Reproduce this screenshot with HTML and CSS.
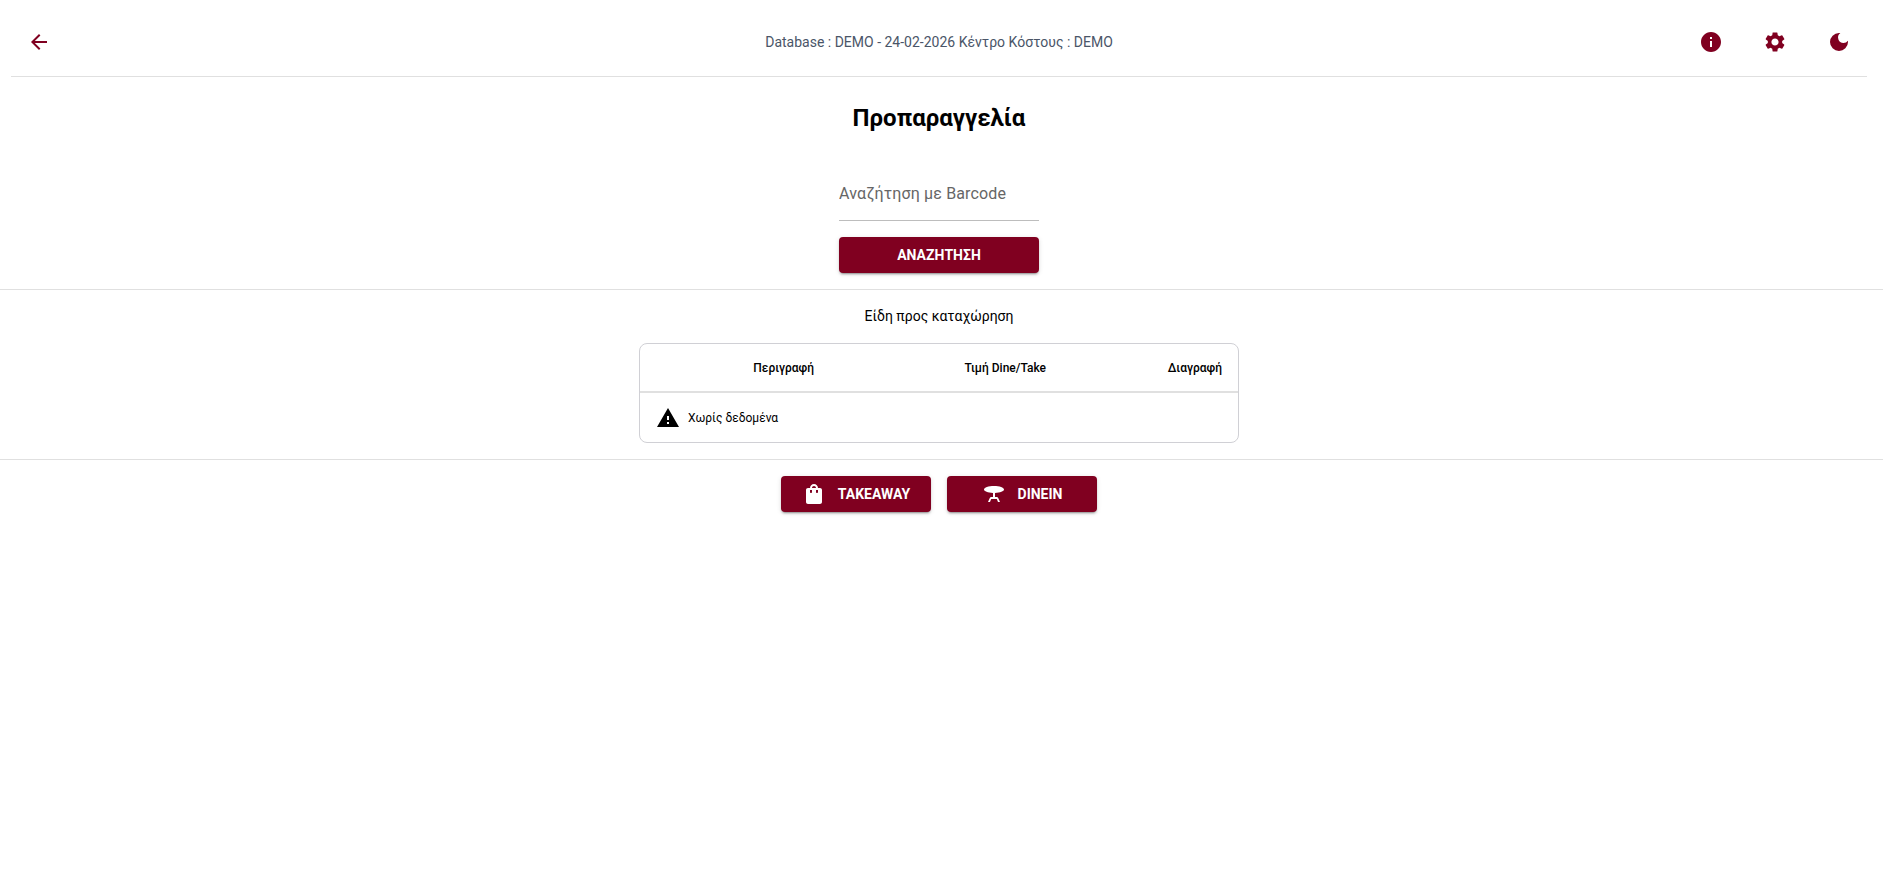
FILE: index.html
```html
<!DOCTYPE html>
<html lang="el">
  <head>
    <meta charset="UTF-8" />
    <meta name="viewport" content="width=device-width, initial-scale=1.0" />
    <title>Προπαραγγελία</title>
    <link rel="stylesheet" href="styles.css">
  </head>
  <body>
    <div class="page">
      <header class="topbar">
        <button class="icon-btn">
          <svg viewBox="0 0 24 24"><path d="M20 11H7.83l5.59-5.59L12 4l-8 8 8 8 1.41-1.41L7.83 13H20v-2z"/></svg>
        </button>
        <div class="db-info">Database : DEMO - 24-02-2026 Κέντρο Κόστους : DEMO</div>
        <div class="topbar-actions">
          <button class="icon-btn">
            <svg viewBox="0 0 24 24"><path d="M12 2C6.48 2 2 6.48 2 12s4.48 10 10 10 10-4.48 10-10S17.52 2 12 2zm1 15h-2v-6h2v6zm0-8h-2V7h2v2z"/></svg>
          </button>
          <button class="icon-btn">
            <svg viewBox="0 0 24 24"><path d="M19.14 12.94c.04-.3.06-.61.06-.94 0-.32-.02-.64-.07-.94l2.03-1.58a.49.49 0 0 0 .12-.61l-1.92-3.32a.488.488 0 0 0-.59-.22l-2.39.96c-.5-.38-1.03-.7-1.62-.94l-.36-2.54a.484.484 0 0 0-.48-.41h-3.84c-.24 0-.43.17-.47.41l-.36 2.54c-.59.24-1.13.57-1.62.94l-2.39-.96c-.22-.08-.47 0-.59.22L2.74 8.87c-.12.21-.08.47.12.61l2.03 1.58c-.05.3-.09.63-.09.94s.02.64.07.94l-2.03 1.58a.49.49 0 0 0-.12.61l1.92 3.32c.12.22.37.29.59.22l2.39-.96c.5.38 1.03.7 1.62.94l.36 2.54c.05.24.24.41.48.41h3.84c.24 0 .44-.17.47-.41l.36-2.54c.59-.24 1.13-.56 1.62-.94l2.39.96c.22.08.47 0 .59-.22l1.92-3.32c.12-.22.07-.47-.12-.61l-2.01-1.58zM12 15.6c-1.98 0-3.6-1.62-3.6-3.6s1.62-3.6 3.6-3.6 3.6 1.62 3.6 3.6-1.62 3.6-3.6 3.6z"/></svg>
          </button>
          <button class="icon-btn">
            <svg viewBox="0 0 24 24"><path d="M12 3a9 9 0 1 0 9 9c0-.46-.04-.92-.1-1.36a5.39 5.39 0 0 1-4.4 2.26 5.4 5.4 0 0 1-3.14-9.8c-.44-.06-.9-.1-1.36-.1z"/></svg>
          </button>
        </div>
      </header>

      <main class="main">
        <h1 class="title">Προπαραγγελία</h1>

        <section class="search">
          <input class="search-input" type="text" placeholder="Αναζήτηση με Barcode" />
          <button class="btn btn-block">ΑΝΑΖΗΤΗΣΗ</button>
        </section>

        <hr class="divider" />

        <p class="list-title">Είδη προς καταχώρηση</p>

        <div class="grid">
          <div class="grid-head">
            <span class="col">Περιγραφή</span>
            <span class="col">Τιμή Dine/Take</span>
            <span class="col">Διαγραφή</span>
          </div>
          <div class="grid-empty">
            <svg class="warn" viewBox="0 0 24 24"><path d="M1 21h22L12 2 1 21zm12-3h-2v-2h2v2zm0-4h-2v-4h2v4z"/></svg>
            <span>Χωρίς δεδομένα</span>
          </div>
        </div>

        <hr class="divider" />

        <div class="actions">
          <button class="btn btn-icon">
            <svg viewBox="0 0 24 24"><path d="M18 6h-2c0-2.21-1.79-4-4-4S8 3.79 8 6H6c-1.1 0-2 .9-2 2v12c0 1.1.9 2 2 2h12c1.1 0 2-.9 2-2V8c0-1.1-.9-2-2-2zm-8 4c0 .55-.45 1-1 1s-1-.45-1-1V8h2v2zm2-6c1.1 0 2 .9 2 2h-4c0-1.1.9-2 2-2zm4 6c0 .55-.45 1-1 1s-1-.45-1-1V8h2v2z"/></svg>
            <span>TAKEAWAY</span>
          </button>
          <button class="btn btn-icon">
            <svg viewBox="0 0 24 24"><path d="M22 7.5C22 5.57 17.52 4 12 4S2 5.57 2 7.5c0 1.81 3.95 3.3 9 3.48V15H9.24c-.65 0-1.24.41-1.45 1.03L6 20h2l1.2-3h5.6l1.2 3h2l-1.79-3.97A1.55 1.55 0 0 0 14.76 15H13v-4.02c5.05-.18 9-1.67 9-3.48z"/></svg>
            <span>DINEIN</span>
          </button>
        </div>
      </main>
    </div>
  </body>
</html>
```

FILE: styles.css
```css
* {
  box-sizing: border-box;
}

html,
body {
  margin: 0;
  height: 100%;
  background-color: #fff;
  overflow: hidden;
}

body {
  font-family: Roboto, "Liberation Sans", sans-serif;
  color: #000;
}

.page {
  width: 1878px;
}

.topbar {
  display: grid;
  grid-template-columns: 1fr auto 1fr;
  align-items: center;
  height: 77px;
  margin: 0 11px;
  border-bottom: 1px solid #e0e0e0;
  padding: 8px 4px 0;
}

.icon-btn {
  display: flex;
  align-items: center;
  justify-content: center;
  width: 48px;
  height: 48px;
  padding: 0;
  border: 0;
  background: none;
  color: #800020;
}

.icon-btn svg {
  width: 24px;
  height: 24px;
  fill: currentColor;
}

.db-info {
  font-size: 14px;
  color: #4a5568;
}

.topbar-actions {
  display: flex;
  justify-content: flex-end;
  gap: 16px;
}

.main {
  display: flex;
  flex-direction: column;
  align-items: center;
}

.title {
  margin: 25px 0 0;
  font-size: 24px;
  line-height: 32px;
  font-weight: 700;
}

.search {
  display: flex;
  flex-direction: column;
  width: 200px;
  margin-top: 31px;
}

.search-input {
  height: 56px;
  border: 0;
  border-bottom: 1px solid #bdbdbd;
  padding: 2px 0 0;
  font-family: inherit;
  font-size: 16px;
  letter-spacing: 0.15px;
  outline: none;
  background: none;
}

.search-input::placeholder {
  color: #666;
  opacity: 1;
}

.btn {
  display: flex;
  align-items: center;
  justify-content: center;
  height: 36px;
  border: 0;
  border-radius: 4px;
  background-color: #800020;
  color: #fff;
  font-family: inherit;
  font-size: 14px;
  font-weight: 700;
  box-shadow: 0 3px 1px -2px rgba(0, 0, 0, 0.2), 0 2px 2px 0 rgba(0, 0, 0, 0.14), 0 1px 5px 0 rgba(0, 0, 0, 0.12);
}

.btn-block {
  margin-top: 16px;
  width: 100%;
}

.divider {
  width: 1883px;
  align-self: flex-start;
  margin: 0;
  border: 0;
  border-top: 1px solid #e0e0e0;
}

.search + .divider {
  margin-top: 16px;
}

.list-title {
  margin: 16px 0 0;
  font-size: 14px;
  line-height: 20px;
}

.grid {
  width: 600px;
  margin: 17px 0 16px;
  border: 1px solid #d0d0d5;
  border-radius: 8px;
}

.grid-head {
  display: grid;
  grid-template-columns: 190px 232px 176px;
  align-items: center;
  height: 49px;
  border-bottom: 2px solid #e0e0e0;
  font-size: 12px;
  font-weight: 500;
}

.col {
  text-align: right;
  padding-right: 16px;
}

.grid-empty {
  display: flex;
  align-items: center;
  gap: 8px;
  height: 49px;
  padding-left: 16px;
  font-size: 12px;
}

.warn {
  width: 24px;
  height: 24px;
}

.actions {
  display: flex;
  gap: 16px;
  margin-top: 16px;
}

.btn-icon {
  gap: 12px;
  width: 150px;
}

.btn-icon svg {
  width: 24px;
  height: 24px;
  fill: currentColor;
}
```
